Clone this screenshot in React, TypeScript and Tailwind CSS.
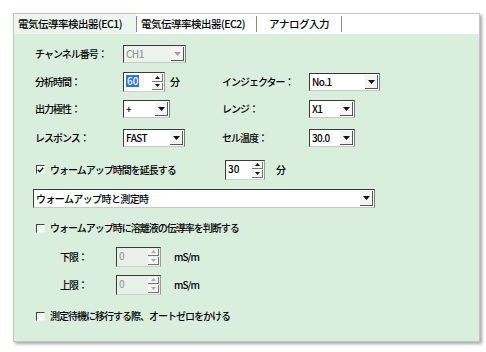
import React from "react";

const FONT = "font-['Noto_Sans_CJK_JP','Noto_Sans',sans-serif]";

function Down({ c = "#111" }: { c?: string }) {
  return (
    <svg width="7" height="4" viewBox="0 0 7 4">
      <path d="M0 0H7L3.5 4Z" fill={c} />
    </svg>
  );
}
function SmallUp({ c = "#111" }: { c?: string }) {
  return (
    <svg width="5" height="3" viewBox="0 0 5 3">
      <path d="M0 3H5L2.5 0Z" fill={c} />
    </svg>
  );
}
function SmallDown({ c = "#111" }: { c?: string }) {
  return (
    <svg width="5" height="3" viewBox="0 0 5 3">
      <path d="M0 0H5L2.5 3Z" fill={c} />
    </svg>
  );
}

function Combo({ cls, value, disabled }: { cls: string; value: string; disabled?: boolean }) {
  return (
    <div
      className={`flex h-[18px] border border-t-[#3a3a3a] border-l-[#3a3a3a] border-r-[#7a7a7a] border-b-[#c8c8c8] ${
        disabled ? "bg-[#eef2ef]" : "bg-white"
      } ${cls}`}
    >
      <div
        className={`flex-1 flex items-center pl-[2px] text-[10px] leading-none font-medium tracking-[-0.6px] ${
          disabled ? "text-[#9a9a9a]" : "text-[#000]"
        }`}
      >
        {value}
      </div>
      <div className="flex items-center justify-center w-[13px] my-[1px] mr-[1px] bg-[#f4f4f4] border-r border-b border-r-[#555] border-b-[#555]">
        <Down c={disabled ? "#a0a0a0" : "#111"} />
      </div>
    </div>
  );
}

function Spin({
  cls,
  value,
  disabled,
  selected,
}: {
  cls: string;
  value: string;
  disabled?: boolean;
  selected?: boolean;
}) {
  const ac = disabled ? "#a8a8a8" : "#111";
  return (
    <div
      className={`flex h-[20px] border border-t-[#3a3a3a] border-l-[#3a3a3a] border-r-[#9a9a9a] border-b-[#d0d0d0] ${
        disabled ? "bg-[#e9f0ea]" : "bg-white"
      } ${cls}`}
    >
      <div className="flex-1 flex items-start pt-[2px] pl-[2px]">
        <span
          className={`text-[10px] leading-[12px] font-medium ${
            selected ? "bg-[#2f74d8] text-white px-[1px]" : disabled ? "text-[#a0a0a0]" : "text-[#000]"
          }`}
        >
          {value}
        </span>
      </div>
      <div className="flex flex-col w-[11px] my-[1px] mr-[1px] gap-[1px]">
        <div className="flex-1 flex items-center justify-center bg-[#f4f4f4] border-r border-b border-r-[#777] border-b-[#777]">
          <SmallUp c={ac} />
        </div>
        <div className="flex-1 flex items-center justify-center bg-[#f4f4f4] border-r border-b border-r-[#777] border-b-[#777]">
          <SmallDown c={ac} />
        </div>
      </div>
    </div>
  );
}

function Check({ checked }: { checked?: boolean }) {
  return (
    <div className="flex items-center justify-center w-[9px] h-[9px] border border-t-[#444] border-l-[#444] border-r-[#e8f3ea] border-b-[#e8f3ea] bg-[#f3f9f4]">
      {checked && (
        <svg width="7" height="6" viewBox="0 0 7 6">
          <path d="M0.8 2.8L2.7 4.8L6.2 0.8" stroke="#111" strokeWidth="1.4" fill="none" />
        </svg>
      )}
    </div>
  );
}

const L = "text-[10px] leading-none tracking-[-1px] text-[#000] font-medium";
const T = "text-[10.5px] leading-none tracking-[-0.5px] text-[#000] font-medium";

export default function App() {
  return (
    <div className={`w-[486px] h-[352px] bg-white pt-[13px] pl-[13px] ${FONT}`}>
      <div className="w-[467px] h-[329px] border border-[#c4c4c4] flex flex-col shadow-[2px_2px_3px_rgba(0,0,0,0.35)]">
        {/* tabs */}
        <div className="flex h-[20px] bg-white">
          <div className="w-[122px] bg-[#edf5ef] flex items-center pl-[4px]">
            <span className={T}>電気伝導率検出器(EC1)</span>
          </div>
          <div className="w-[1px] my-[2px] bg-[#8a8a8a]" />
          <div className="w-[119px] flex items-center pl-[4px]">
            <span className={T}>電気伝導率検出器(EC2)</span>
          </div>
          <div className="w-[1px] my-[2px] bg-[#8a8a8a]" />
          <div className="w-[84px] flex items-center justify-center">
            <span className={T}>アナログ入力</span>
          </div>
          <div className="w-[1px] my-[2px] bg-[#8a8a8a]" />
        </div>
        {/* body */}
        <div className="flex-1 bg-[#d9eedd] flex flex-col pl-[21px]">
          <div className="flex items-center mt-[11px] h-[18px]">
            <div className={`w-[88px] ${L}`}>チャンネル番号：</div>
            <Combo cls="w-[63px]" value="CH1" disabled />
          </div>

          <div className="flex items-center mt-[9px] h-[20px]">
            <div className={`w-[88px] ${L}`}>分析時間：</div>
            <Spin cls="w-[42px]" value="60" selected />
            <div className={`ml-[5px] w-[52px] ${L}`}>分</div>
            <div className={`w-[87px] ${L}`}>インジェクター：</div>
            <Combo cls="w-[71px]" value="No.1" />
          </div>

          <div className="flex items-center mt-[8px] h-[18px]">
            <div className={`w-[88px] ${L}`}>出力極性：</div>
            <Combo cls="w-[47px]" value="+" />
            <div className="w-[52px]" />
            <div className={`w-[87px] ${L}`}>レンジ：</div>
            <Combo cls="w-[46px]" value="X1" />
          </div>

          <div className="flex items-center mt-[11px] h-[18px]">
            <div className={`w-[88px] ${L}`}>レスポンス：</div>
            <Combo cls="w-[62px]" value="FAST" />
            <div className="w-[37px]" />
            <div className={`w-[87px] ${L}`}>セル温度：</div>
            <Combo cls="w-[46px]" value="30.0" />
          </div>

          <div className="flex items-center mt-[13px] h-[19px]">
            <div className="w-[190px] flex items-center gap-[5px] pl-[1px]">
              <Check checked />
              <span className={L}>ウォームアップ時間を延長する</span>
            </div>
            <Spin cls="w-[40px] h-[19px]" value="30" />
            <div className={`ml-[11px] ${L}`}>分</div>
          </div>

          <div className="flex items-center mt-[10px] -ml-[2px]">
            <Combo cls="w-[342px] h-[19px]" value="ウォームアップ時と測定時" />
          </div>

          <div className="flex items-center mt-[13px] h-[14px] gap-[5px] pl-[1px]">
            <Check />
            <span className={L}>ウォームアップ時に溶離液の伝導率を判断する</span>
          </div>

          <div className="flex items-center mt-[12px] h-[19px]">
            <div className={`w-[81px] pl-[25px] ${L}`}>下限：</div>
            <Spin cls="w-[45px] h-[19px]" value="0" disabled />
            <div className={`ml-[13px] ${L} tracking-[-0.3px]`}>mS/m</div>
          </div>

          <div className="flex items-center mt-[9px] h-[19px]">
            <div className={`w-[81px] pl-[25px] ${L}`}>上限：</div>
            <Spin cls="w-[45px] h-[19px]" value="0" disabled />
            <div className={`ml-[13px] ${L} tracking-[-0.3px]`}>mS/m</div>
          </div>

          <div className="flex items-center mt-[15px] h-[14px] gap-[5px] pl-[1px]">
            <Check />
            <span className={L}>測定待機に移行する際、オートゼロをかける</span>
          </div>
        </div>
      </div>
    </div>
  );
}
